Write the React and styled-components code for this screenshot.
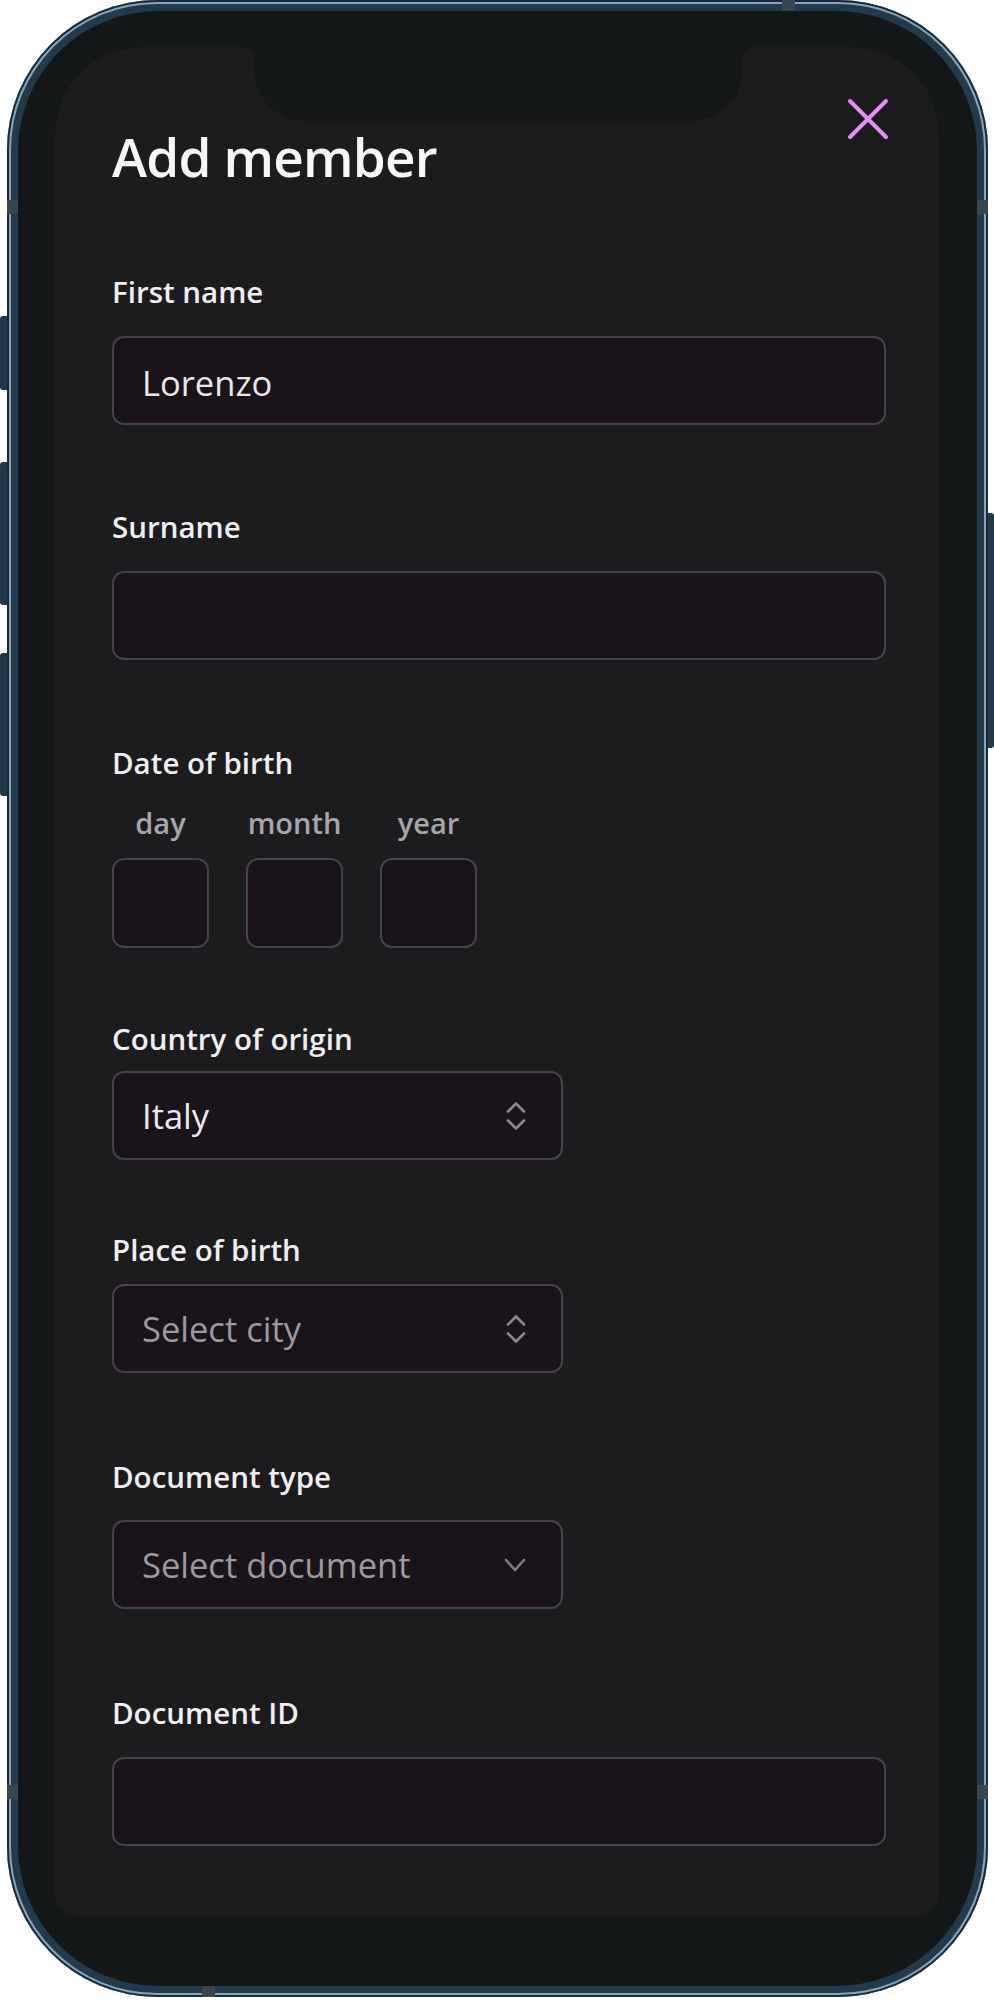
import React from "react";
import styled, { createGlobalStyle } from "styled-components";

const GlobalStyle = createGlobalStyle`
  html, body {
    margin: 0;
    padding: 0;
    background: #ffffff;
  }
  body {
    font-family: "Open Sans", "Noto Sans", sans-serif;
  }
  * {
    box-sizing: border-box;
  }
`;

const Phone = styled.div`
  position: relative;
  width: 981px;
  height: 1997px;
  margin-left: 7px;
  padding: 11px;
  border-radius: 150px;
  background: #233a4a;
  box-shadow: inset 0 0 0 2px #1a2b37, inset 0 0 0 4px #86a5bd;
`;

const SideButton = styled.div`
  position: absolute;
  top: ${(p) => p.$top}px;
  height: ${(p) => p.$height}px;
  width: 7px;
  background: #22394a;
  ${(p) =>
    p.$side === "left"
      ? "left: -7px; border-radius: 3px 0 0 3px;"
      : "right: -6px; width: 6px; border-radius: 0 3px 3px 0;"}
`;

const AntennaMark = styled.div`
  position: absolute;
  background: #37464f;
  width: ${(p) => (p.$vertical ? 13 : 11)}px;
  height: ${(p) => (p.$vertical ? 11 : 14)}px;
  ${(p) => p.$pos}
`;

const Bezel = styled.div`
  display: flex;
  height: 100%;
  padding: 36px 38px 70px 37px;
  border-radius: 140px;
  background: #131718;
`;

const Screen = styled.div`
  position: relative;
  flex: 1;
  background: #1c1c1e;
  border-radius: 88px 88px 22px 22px;
  overflow: hidden;
`;

const Notch = styled.div`
  position: absolute;
  top: 0;
  left: 200px;
  width: 487px;
  height: 74px;
  background: #131718;
  border-radius: 0 0 50px 50px;

  &::before,
  &::after {
    content: "";
    position: absolute;
    top: 0;
    width: 12px;
    height: 12px;
  }
  &::before {
    left: -12px;
    background: radial-gradient(circle at 0 100%, transparent 11.5px, #131718 12px);
  }
  &::after {
    right: -12px;
    background: radial-gradient(circle at 100% 100%, transparent 11.5px, #131718 12px);
  }
`;

const Content = styled.div`
  display: flex;
  flex-direction: column;
  padding: 51px 53px 0 57px;
`;

const Header = styled.div`
  display: flex;
  justify-content: space-between;
  align-items: flex-start;
  margin-right: -3px;
`;

const Title = styled.h1`
  margin: 25px 0 0;
  font-size: 53px;
  line-height: 67px;
  font-weight: 600;
  letter-spacing: -0.8px;
  color: #f7f7f8;
`;

const CloseButton = styled.button`
  width: 42px;
  height: 42px;
  padding: 0;
  border: none;
  background: none;
  cursor: pointer;

  svg {
    display: block;
  }
`;

const FieldWrap = styled.div`
  display: flex;
  flex-direction: column;
  gap: ${(p) => p.$gap}px;
  margin-top: ${(p) => p.$mt}px;
`;

const Label = styled.label`
  font-size: 29.5px;
  line-height: 40px;
  font-weight: 600;
  color: #f0eef0;
`;

const TextInput = styled.input`
  width: ${(p) => (p.$width ? `${p.$width}px` : "100%")};
  height: ${(p) => p.$height || 89}px;
  padding: 4px 28px 0;
  border: 2px solid #45424a;
  border-radius: 12px;
  background: #1a141a;
  font: inherit;
  font-size: 34.5px;
  color: #e9e7eb;
  outline: none;
`;

const DateRow = styled.div`
  display: flex;
  gap: 37px;
`;

const DatePart = styled.div`
  display: flex;
  flex-direction: column;
  align-items: center;
  gap: 15px;
`;

const SubLabel = styled.span`
  font-size: 29px;
  line-height: 40px;
  font-weight: 600;
  color: #a7a4ab;
`;

const SelectBox = styled.div`
  display: flex;
  align-items: center;
  justify-content: space-between;
  width: 451px;
  height: 89px;
  padding: 0 35px 0 28px;
  border: 2px solid #45424a;
  border-radius: 12px;
  background: #1a141a;
  font-size: 34.5px;
  color: ${(p) => (p.$placeholder ? "#9c99a0" : "#ebe9ed")};

  svg {
    display: block;
    flex-shrink: 0;
  }
`;

const UpDownIcon = () => (
  <svg width="20" height="28" viewBox="0 0 20 28" fill="none">
    <path
      d="M2 9.5 L10 1.5 L18 9.5 M2 18.5 L10 26.5 L18 18.5"
      stroke="#8b878f"
      strokeWidth="2.6"
      strokeLinecap="round"
      strokeLinejoin="round"
    />
  </svg>
);

const DownIcon = () => (
  <svg width="22" height="14" viewBox="0 0 22 14" fill="none">
    <path
      d="M2 2 L11 12 L20 2"
      stroke="#7c7980"
      strokeWidth="2.6"
      strokeLinecap="round"
      strokeLinejoin="round"
    />
  </svg>
);

const CloseIcon = () => (
  <svg width="42" height="42" viewBox="0 0 42 42" fill="none">
    <path
      d="M3 3 L39 39 M39 3 L3 39"
      stroke="#e38ef1"
      strokeWidth="4"
      strokeLinecap="round"
    />
  </svg>
);

const Field = ({ label, mt, gap, children }) => (
  <FieldWrap $mt={mt} $gap={gap}>
    <Label>{label}</Label>
    {children}
  </FieldWrap>
);

const Select = ({ value, placeholder, icon }) => (
  <SelectBox $placeholder={!value}>
    <span>{value || placeholder}</span>
    {icon === "down" ? <DownIcon /> : <UpDownIcon />}
  </SelectBox>
);

const dateParts = ["day", "month", "year"];

const App = () => {
  return (
    <>
      <GlobalStyle />
      <Phone>
        <SideButton $side="left" $top={316} $height={74} />
        <SideButton $side="left" $top={462} $height={143} />
        <SideButton $side="left" $top={653} $height={143} />
        <SideButton $side="right" $top={513} $height={235} />

        <AntennaMark $vertical $pos="top: 0; left: 775px;" />
        <AntennaMark $vertical $pos="bottom: 0; left: 195px;" />
        <AntennaMark $pos="top: 200px; left: 0;" />
        <AntennaMark $pos="top: 1785px; left: 0;" />
        <AntennaMark $pos="top: 200px; right: 0;" />
        <AntennaMark $pos="top: 1785px; right: 0;" />

        <Bezel>
          <Screen>
            <Notch />
            <Content>
              <Header>
                <Title>Add member</Title>
                <CloseButton aria-label="Close">
                  <CloseIcon />
                </CloseButton>
              </Header>

              <Field label="First name" mt={82} gap={24}>
                <TextInput defaultValue="Lorenzo" />
              </Field>

              <Field label="Surname" mt={82} gap={24}>
                <TextInput />
              </Field>

              <Field label="Date of birth" mt={83} gap={20}>
                <DateRow>
                  {dateParts.map((part) => (
                    <DatePart key={part}>
                      <SubLabel>{part}</SubLabel>
                      <TextInput $width={97} $height={90} />
                    </DatePart>
                  ))}
                </DateRow>
              </Field>

              <Field label="Country of origin" mt={71} gap={12}>
                <Select value="Italy" />
              </Field>

              <Field label="Place of birth" mt={70} gap={14}>
                <Select placeholder="Select city" />
              </Field>

              <Field label="Document type" mt={84} gap={23}>
                <Select placeholder="Select document" icon="down" />
              </Field>

              <Field label="Document ID" mt={84} gap={24}>
                <TextInput />
              </Field>
            </Content>
          </Screen>
        </Bezel>
      </Phone>
    </>
  );
};

export default App;
